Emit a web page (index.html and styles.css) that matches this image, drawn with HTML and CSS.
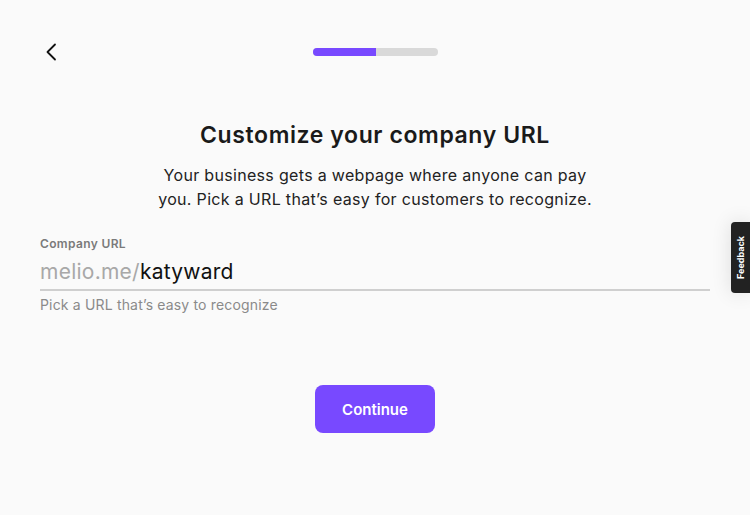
FILE: index.html
```html
<!DOCTYPE html>
<html lang="en">
<head>
  <meta charset="UTF-8">
  <title>Customize your company URL</title>
  <link rel="stylesheet" href="styles.css">
</head>
<body>

  <header class="topbar">
    <button class="back" aria-label="Back">
      <svg width="12" height="18" viewBox="0 0 12 18"><path d="M10 1.5 L2.5 9 L10 16.5" fill="none" stroke="#111" stroke-width="1.8" stroke-linecap="round" stroke-linejoin="round"/></svg>
    </button>
    <div class="progress"><div class="progress-fill" style="width:50%"></div></div>
    <div class="spacer"></div>
  </header>

  <main class="content">
    <h1>Customize your company URL</h1>
    <p class="intro">Your business gets a webpage where anyone can pay<br>you. Pick a URL that’s easy for customers to recognize.</p>

    <div class="field">
      <label class="field-label">Company URL</label>
      <div class="field-input">
        <span class="prefix">melio.me/</span><span class="value">katyward</span>
      </div>
      <div class="field-hint">Pick a URL that’s easy to recognize</div>
    </div>

    <button class="continue">Continue</button>
  </main>

  <div class="feedback"><span>Feedback</span></div>

</body>
</html>
```

FILE: styles.css
```css
body {
  margin: 0;
  background: #fafafa;
  font-family: Inter, "Noto Sans", sans-serif;
  color: #1a1a1a;
  height: 515px;
  overflow: hidden;
}
.topbar {
  display: flex;
  align-items: center;
  padding: 42px 40px 0 40px;
  height: 20px;
}
.back {
  background: none;
  border: none;
  padding: 0 0 0 5px;
  width: 60px;
  text-align: left;
  cursor: pointer;
  display: flex;
}
.progress {
  margin-left: 213px;
  width: 125px;
  height: 8px;
  border-radius: 4px;
  background: #d9d9d9;
  overflow: hidden;
}
.progress-fill {
  height: 100%;
  background: #7849ff;
}
.content {
  display: flex;
  flex-direction: column;
  align-items: center;
  padding: 0 40px;
}
h1 {
  margin: 58px 0 0 0;
  font-size: 23px;
  font-weight: 600;
  line-height: 30px;
  letter-spacing: 0.6px;
  color: #1a1a1a;
}
.intro {
  margin: 13px 0 0 0;
  font-size: 16px;
  line-height: 24px;
  letter-spacing: 0.32px;
  text-align: center;
  color: #222;
}
.field {
  align-self: stretch;
  margin-top: 25px;
}
.field-label {
  display: block;
  font-size: 12px;
  font-weight: 600;
  letter-spacing: 0.35px;
  color: #7a7a7a;
}
.field-input {
  margin-top: 7px;
  font-size: 21px;
  line-height: 28px;
  letter-spacing: 0.25px;
  padding-bottom: 3px;
  border-bottom: 2px solid #cfcfcf;
}
.prefix {
  color: #a8a8a8;
}
.value {
  color: #111;
}
.field-hint {
  margin-top: 5px;
  font-size: 14px;
  letter-spacing: 0.17px;
  color: #8a8a8a;
}
.continue {
  margin-top: 72px;
  width: 120px;
  height: 48px;
  border: none;
  border-radius: 8px;
  background: #7849ff;
  color: white;
  font-family: inherit;
  font-size: 15px;
  font-weight: 600;
  cursor: pointer;
}
.feedback {
  position: absolute;
  right: 0;
  top: 222px;
  width: 19px;
  height: 71px;
  background: #222;
  border-radius: 4px 0 0 4px;
  box-shadow: 0 0 20px rgba(0,0,0,0.12);
  display: flex;
  align-items: center;
  justify-content: center;
}
.feedback span {
  transform: rotate(-90deg);
  color: white;
  font-size: 9px;
  font-weight: 700;
  white-space: nowrap;
}
```
